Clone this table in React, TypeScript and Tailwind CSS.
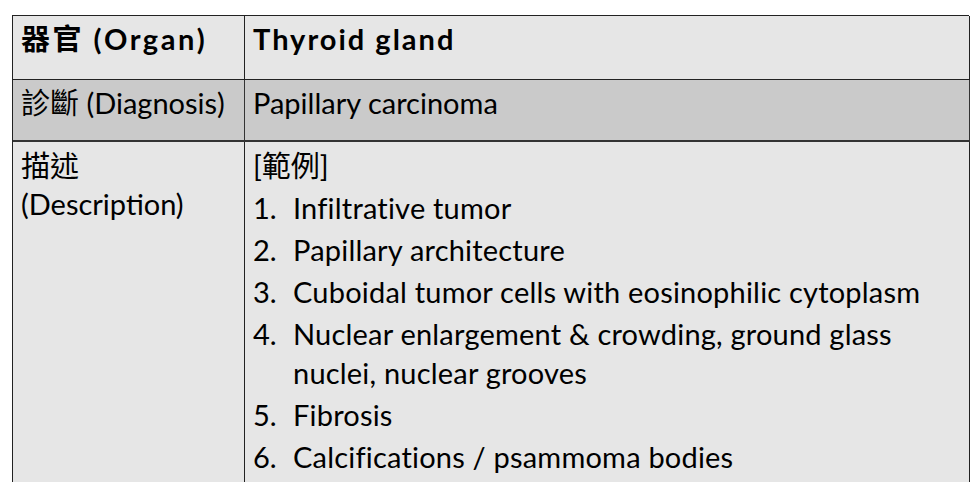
export default function App() {
  const items: string[][] = [
    ["Infiltrative tumor"],
    ["Papillary architecture"],
    ["Cuboidal tumor cells with eosinophilic cytoplasm"],
    ["Nuclear enlargement & crowding, ground glass", "nuclei, nuclear grooves"],
    ["Fibrosis"],
    ["Calcifications / psammoma bodies"],
  ];
  return (
    <div
      className="w-[979px] h-[482px] overflow-hidden bg-white pt-[15px] pl-[12px] text-black"
      style={{ fontFamily: '"Lato", "Noto Sans CJK TC", sans-serif' }}
    >
      <div className="w-[957px] grid grid-cols-[232px_725px] border-t border-l border-[#222] text-[29px] leading-[39px]">
        <div className="h-[64px] bg-[#e6e6e6] border-r border-b border-[#222] pl-[8px] pt-[3px] font-bold tracking-[2.5px] whitespace-nowrap">
          器官 (Organ)
        </div>
        <div className="h-[64px] bg-[#e6e6e6] border-r border-b border-[#222] pl-[8px] pt-[3px] font-bold tracking-[2px]">
          Thyroid gland
        </div>
        <div className="h-[62px] bg-[#cacaca] border-r border-b-2 border-[#333] pl-[8px] pt-[3px] whitespace-nowrap">
          診斷 (Diagnosis)
        </div>
        <div className="h-[62px] bg-[#cacaca] border-r border-b-2 border-[#333] pl-[8px] pt-[3px]">
          Papillary carcinoma
        </div>
        <div className="h-[400px] bg-[#e6e6e6] border-r border-[#222] pl-[8px] pt-[4px]">
          <div>描述</div>
          <div className="-mt-[1px]">(Description)</div>
        </div>
        <div className="h-[400px] bg-[#e6e6e6] border-r border-[#222] pl-[8px] pt-[4px]">
          <div>[範例]</div>
          <div className="mt-[3px] flex flex-col gap-[3px]">
            {items.map((lines, i) => (
              <div key={i} className="flex">
                <div className="w-[40px] shrink-0">{i + 1}.</div>
                <div className="whitespace-nowrap tracking-[0.2px]">
                  {lines.map((l, j) => (
                    <div key={j}>{l}</div>
                  ))}
                </div>
              </div>
            ))}
          </div>
        </div>
      </div>
    </div>
  );
}
